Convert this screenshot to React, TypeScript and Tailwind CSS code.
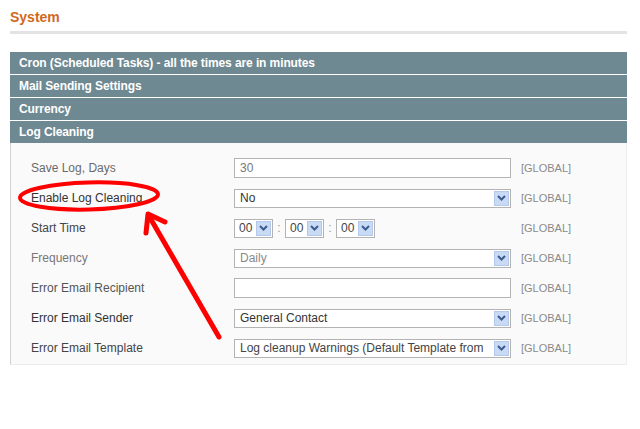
import React from "react";

type Row = {
  label: string;
  labelColor: string;
  field: React.ReactNode;
};

function Chevron() {
  return (
    <svg width="9" height="6" viewBox="0 0 9 6" fill="none">
      <path d="M1 1 L4.5 4.5 L8 1" stroke="#3b5b8f" strokeWidth="2" />
    </svg>
  );
}

function DropButton() {
  return (
    <span className="flex h-[15px] w-[15px] shrink-0 items-center justify-center border border-[#b4c8ec] bg-[#c9dbf4]">
      <Chevron />
    </span>
  );
}

function TextInput({ value = "", color = "#555" }: { value?: string; color?: string }) {
  return (
    <div
      className="flex h-[20px] w-[277px] items-center border border-[#b3b3b3] bg-white pl-[5px] text-[12px]"
      style={{ color }}
    >
      {value}
    </div>
  );
}

function Select({
  value,
  color = "#333",
  width = "w-[277px]",
}: {
  value: string;
  color?: string;
  width?: string;
}) {
  return (
    <div
      className={`flex h-[19px] ${width} items-center border border-[#b3b3b3] bg-white pl-[5px] pr-[1px] text-[12px]`}
      style={{ color }}
    >
      <span className="min-w-0 flex-1 overflow-hidden whitespace-nowrap">{value}</span>
      <DropButton />
    </div>
  );
}

function TimeSelect() {
  return (
    <div className="flex h-[19px] w-[39px] items-center border border-[#b3b3b3] bg-white pl-[4px] pr-[1px] text-[12px] text-[#444]">
      <span className="flex-1">00</span>
      <DropButton />
    </div>
  );
}

const rows: Row[] = [
  { label: "Save Log, Days", labelColor: "#6a6a6a", field: <TextInput value="30" color="#777" /> },
  { label: "Enable Log Cleaning", labelColor: "#333", field: <Select value="No" /> },
  {
    label: "Start Time",
    labelColor: "#444",
    field: (
      <div className="flex items-center">
        <TimeSelect />
        <span className="w-[12px] text-center text-[12px] text-[#999]">:</span>
        <TimeSelect />
        <span className="w-[12px] text-center text-[12px] text-[#999]">:</span>
        <TimeSelect />
      </div>
    ),
  },
  { label: "Frequency", labelColor: "#777", field: <Select value="Daily" color="#888" /> },
  { label: "Error Email Recipient", labelColor: "#555", field: <TextInput /> },
  { label: "Error Email Sender", labelColor: "#333", field: <Select value="General Contact" /> },
  {
    label: "Error Email Template",
    labelColor: "#444",
    field: <Select value="Log cleanup Warnings (Default Template from" color="#444" />,
  },
];

const sections = [
  "Cron (Scheduled Tasks) - all the times are in minutes",
  "Mail Sending Settings",
  "Currency",
  "Log Cleaning",
];

export default function App() {
  return (
    <div className="relative h-[429px] w-[640px] overflow-hidden bg-white font-['Liberation_Sans',Arial,sans-serif]">
      <div className="w-[627px] pl-[10px] pt-[9px]">
        <h3 className="text-[14px] font-bold leading-[17px] text-[#d0691c]">System</h3>
        <div className="mt-[5px] h-[3px] bg-[#e3e3e3]" />

        {/* collapsible group heads */}
        <div className="mt-[18px] flex flex-col gap-px">
          {sections.map((s) => (
            <div
              key={s}
              className="flex h-[22px] items-center bg-[#6f8992] pl-[9px] text-[12px] font-bold tracking-[-0.1px] text-white"
            >
              {s}
            </div>
          ))}
        </div>

        {/* Log Cleaning fieldset */}
        <div className="border-x border-b border-[#ededed] border-l-[#d2d2d2] bg-[#fafafa] pb-[1px] pt-[10px]">
          {rows.map((r) => (
            <div key={r.label} className="flex h-[30px] items-center pl-[20px]">
              <span className="w-[203px] text-[12px]" style={{ color: r.labelColor }}>
                {r.label}
              </span>
              <div className="w-[277px]">{r.field}</div>
              <span className="ml-[10px] text-[11px] text-[#8a8a8a]">[GLOBAL]</span>
            </div>
          ))}
        </div>
      </div>

      {/* red marker annotation */}
      <svg className="pointer-events-none absolute left-0 top-0" width="640" height="429">
        <ellipse
          cx="89"
          cy="196"
          rx="69"
          ry="13.5"
          transform="rotate(-1.5 89 196)"
          fill="none"
          stroke="#f00"
          strokeWidth="4"
        />
        <line x1="219" y1="337" x2="149" y2="216" stroke="#f00" strokeWidth="5" strokeLinecap="round" />
        <polyline
          points="146,233 148,214 165,222"
          fill="none"
          stroke="#f00"
          strokeWidth="5"
          strokeLinecap="round"
          strokeLinejoin="round"
        />
      </svg>
    </div>
  );
}
